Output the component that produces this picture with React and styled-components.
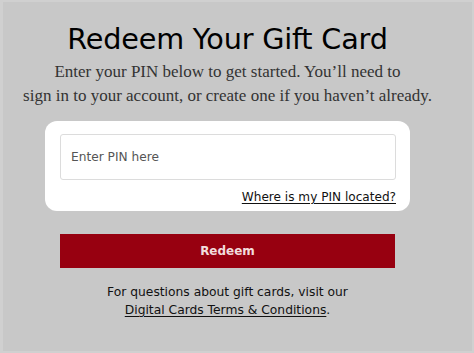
import React from "react";
import styled, { createGlobalStyle } from "styled-components";

const GlobalStyle = createGlobalStyle`
    html, body {
        margin: 0;
        padding: 0;
        background: #c8c8c8;
    }
    * {
        box-sizing: border-box;
    }
`;

export default function App() {
    return (
        <>
            <GlobalStyle />
            <Page>
                <Title>Redeem Your Gift Card</Title>
                <Intro>
                    Enter your PIN below to get started. You’ll need to
                    <br />
                    sign in to your account, or create one if you haven’t already.
                </Intro>
                <Card>
                    <PinInput type='text' placeholder='Enter PIN here' />
                    <HelpLink href='#'>Where is my PIN located?</HelpLink>
                </Card>
                <RedeemButton>Redeem</RedeemButton>
                <Footer>
                    For questions about gift cards, visit our
                    <br />
                    <FooterLink href='#'>Digital Cards Terms &amp; Conditions</FooterLink>.
                </Footer>
            </Page>
        </>
    );
}

const Page = styled.div`
    width: 474px;
    height: 353px;
    display: flex;
    flex-direction: column;
    align-items: center;
    padding: 19px 19px 0 0;
    font-family: "DejaVu Sans", Verdana, sans-serif;
    color: #000;
    background: #c8c8c8;
    box-shadow: inset 3px 2px 0 #d0d0d0, inset -2px -2px 0 #d0d0d0;
    overflow: hidden;
`;

const Title = styled.h1`
    margin: 0;
    font-size: 28.7px;
    font-weight: 400;
    line-height: 40px;
    letter-spacing: -0.2px;
    white-space: nowrap;
`;

const Intro = styled.p`
    margin: 1px 0 0;
    font-family: "Liberation Serif", Georgia, serif;
    font-size: 17px;
    line-height: 24px;
    color: #333;
    text-align: center;
    white-space: nowrap;
`;

const Card = styled.div`
    margin-top: 13px;
    width: 365px;
    display: flex;
    flex-direction: column;
    align-items: flex-end;
    padding: 13px 14px 5px 15px;
    background: #fff;
    border-radius: 12px;
`;

const PinInput = styled.input`
    width: 100%;
    height: 46px;
    padding: 0 10px;
    border: 1px solid #dcdcdc;
    border-radius: 3px;
    font-family: "DejaVu Sans", Verdana, sans-serif;
    font-size: 12.2px;
    color: #333;
    outline: none;
    &::placeholder {
        color: #555;
    }
`;

const HelpLink = styled.a`
    margin-top: 8px;
    font-size: 12.1px;
    line-height: 18px;
    color: #111;
    text-decoration: underline;
    text-underline-offset: 2px;
`;

const RedeemButton = styled.button`
    all: unset;
    margin-top: 23px;
    width: 335px;
    height: 34px;
    text-align: center;
    background: #970010;
    color: #f2dcdc;
    font-family: "DejaVu Sans", Verdana, sans-serif;
    font-size: 12px;
    font-weight: 700;
    line-height: 34px;
`;

const Footer = styled.p`
    margin: 15px 0 0;
    font-size: 12.3px;
    line-height: 18px;
    text-align: center;
    color: #111;
    white-space: nowrap;
`;

const FooterLink = styled.a`
    color: #111;
    text-decoration: underline;
    text-underline-offset: 2px;
`;
